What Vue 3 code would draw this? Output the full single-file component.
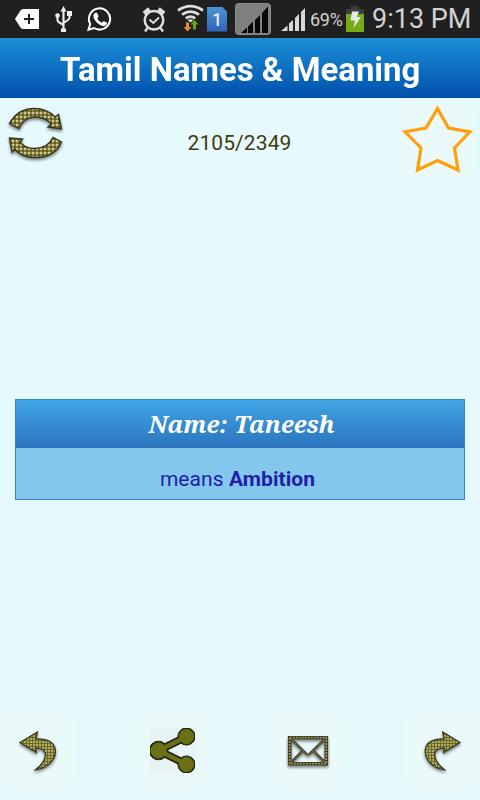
<template>
  <div class="screen">
    <div class="status-bar">
      <svg class="tag" width="25" height="38" viewBox="15 0 25 38">
        <path d="M15 19 L20.5 10.5 Q21.5 9 23 9 H39 V29 H23 Q21.5 29 20.5 27.5 Z" fill="#fff" />
        <path d="M29 14 V24 M24 19 H34" stroke="#222" stroke-width="2" />
      </svg>
      <svg class="usb" width="18" height="38" viewBox="55 0 18 38">
        <g fill="none" stroke="#eee" stroke-width="2.1">
          <path d="M63.5 9 V30 M57.5 16 V20 Q57.5 21.5 59 22.3 L63.5 25 M69.5 13 V17 Q69.5 19 68 20 L63.5 23" />
        </g>
        <path d="M63.5 6 L66.5 11.5 H60.5 Z M67 11 H72 V16 H67 Z M61 28.5 H66 V32 H61 Z" fill="#eee" />
        <circle cx="57.5" cy="15.5" r="2.3" fill="#eee" />
      </svg>
      <svg class="whatsapp" width="25" height="38" viewBox="87 0 25 38">
        <path d="M88.5 29.7 L90.2 24 A10.6 10.6 0 1 1 94 28 Z" fill="none" stroke="#fff" stroke-width="2" />
        <path d="M95 13 Q96.5 12 97.4 13.4 L98.5 16 Q98.8 17 97.3 18.4 Q98.8 21.6 101.8 22.8 Q103.2 20.8 104 21.2 L107 22.7 Q107.2 25.8 103.6 26 C99.5 26 92.8 20 93.4 15.5 Q93.7 13.7 95 13 Z" fill="#fff" />
      </svg>
      <svg class="alarm" width="26" height="38" viewBox="141 0 26 38">
        <circle cx="154" cy="20.2" r="9.3" fill="none" stroke="#ddd" stroke-width="2.5" />
        <path d="M149.5 19.5 L153.3 23 L159 17.5" fill="none" stroke="#ddd" stroke-width="1.9" />
        <path d="M144 13.5 L149.5 9 M164 13.5 L158.5 9" stroke="#ddd" stroke-width="4.2" />
        <path d="M147.5 28 L145 31.5 M160.5 28 L163 31.5" stroke="#ddd" stroke-width="2.4" />
      </svg>
      <svg class="wifi" width="28" height="38" viewBox="177 0 28 38">
        <g fill="none" stroke="#ddd" stroke-width="2.8">
          <path d="M178 10.5 Q190.5 1.8 203 10.5" />
          <path d="M182 14.6 Q190.5 8.6 199 14.6" />
          <path d="M185.8 18.3 Q190.5 15 195.2 18.3" />
        </g>
        <path d="M187.5 20 Q190.5 18.4 193.5 20 L190.5 22.5 Z" fill="#ddd" />
        <path d="M186 22.5 H189 V27 H191.5 L187.5 31.5 L183.5 27 H186 Z" fill="#e98d35" />
        <path d="M193 29.5 V24.5 H190.5 L194.5 20 L198.5 24.5 H196 V29.5 Z" fill="#6da51a" />
      </svg>
      <div class="sim">1</div>
      <svg class="no-sim" width="36" height="38" viewBox="235 0 36 38">
        <rect x="235.5" y="3.5" width="35" height="31" rx="3" fill="#808080" stroke="#8b8b8b" />
        <path d="M241 33 L247 27.5 V33 Z M248 33 V26.5 L253 21.5 V33 Z M255 33 V20 L260 15 V33 Z M262 33 V13 L268 6.5 V33 Z" fill="#080808" />
      </svg>
      <svg class="signal" width="25" height="38" viewBox="281 0 25 38">
        <path d="M281 31 L287.5 25.5 V31 Z M289 31 V23.5 L293 20 V31 Z M295 31 V18 L299 14 V31 Z M301 31 V12 L305 8 V31 Z" fill="#d8d8d8" />
      </svg>
      <span class="percent">69%</span>
      <svg class="battery" width="18" height="38" viewBox="346 0 18 38">
        <path d="M346 9 H351 V6 H359 V9 H364 V14 H346 Z" fill="#3c3c3c" />
        <path d="M346 14 H364 V32 H346 Z" fill="#76ab18" />
        <path d="M352 11.5 H359 L356.7 17 H361 L353.5 28 L355 20.5 H350.5 Z" fill="#e8e8e8" />
      </svg>
      <span class="clock">9:13 PM</span>
    </div>

    <div class="header"><span class="title">Tamil Names &amp; Meaning</span></div>

    <div class="toolbar">
      <button class="refresh">
        <svg width="66" height="75" viewBox="0 103 66 75">
          <defs>
            <pattern id="plaid" width="4" height="4" patternUnits="userSpaceOnUse">
              <rect width="4" height="4" fill="#85803f" />
              <rect width="2" height="2" fill="#d6c29c" />
              <rect x="2" y="2" width="2" height="2" fill="#5a6117" />
            </pattern>
          </defs>
          <g class="shaded" fill="url(#plaid)" stroke="#35351d" stroke-width="1.4">
            <path d="M9.5 123.5 Q18 108.5 34 108.5 Q47 108.5 55 117 L58.5 114.5 L61.5 129 L48 127 L51.5 124 Q45 116.5 34 117 Q23.5 117.5 19 128.5 Z" />
            <path d="M9.5 138 L22.5 139 L20 142.5 Q27 149 35 148.5 Q48 148 53 137.5 L61.5 142 Q55 157.5 35 157.5 Q22 157.5 14.5 149 L12 152 Z" />
          </g>
        </svg>
      </button>
      <span class="counter">{{ position }}/{{ total }}</span>
      <button class="favourite tile">
        <svg width="75" height="75" viewBox="400 103 75 75">
          <path d="M437.5 108.5 L448.5 128 L470 131.8 L454.5 148 L458 170 L437.5 160.5 L417.5 170 L421 148 L405 131.8 L426 128 Z" fill="none" stroke="#ff9f0a" stroke-width="3.2" />
        </svg>
      </button>
    </div>

    <div class="content">
      <div class="name-card">
        <div class="name"><span>Name: {{ entry.name }}</span></div>
        <div class="meaning"><span>means <b>{{ entry.meaning }}</b></span></div>
      </div>
    </div>

    <div class="actions">
      <button class="tile">
        <svg width="75" height="75" viewBox="0 713 75 75">
          <path class="shaded" d="M20 742.5 L37.5 732 L35.8 738.8 C48 738.5 55 743 55.5 751 C55.5 761 46 768.5 35.5 769.8 C43 764 47.5 756 44.5 751.5 Q42 747.8 35.5 748 L36.5 752.5 Z" fill="url(#plaid-fine)" stroke="#35351d" stroke-width="1.2" />
          <defs>
            <pattern id="plaid-fine" width="3" height="3" patternUnits="userSpaceOnUse">
              <rect width="3" height="3" fill="#696b29" />
              <rect width="2" height="2" fill="#b3ab62" />
            </pattern>
          </defs>
        </svg>
      </button>
      <button class="tile">
        <svg width="75" height="75" viewBox="135 713 75 75">
          <rect x="150" y="728" width="45" height="45" fill="#e5f3f3" />
          <path d="M155 773 L195 733 V745 L172 773 Z" fill="#eaf4f4" />
          <svg x="150" y="728" width="45" height="45" viewBox="150 728 45 45">
            <g stroke="#22240f" fill="#22240f">
              <path d="M187 736.5 L158.5 750.5 L187 764.5" fill="none" stroke-width="8" />
              <circle cx="158.5" cy="750.5" r="9.3" />
              <circle cx="186.5" cy="736.5" r="8.6" />
              <circle cx="186.5" cy="764.5" r="8.6" />
            </g>
            <g stroke="#697015" fill="#697015">
              <path d="M187 736.5 L158.5 750.5 L187 764.5" fill="none" stroke-width="4.6" />
              <circle cx="158.5" cy="750.5" r="7.6" />
              <circle cx="186.5" cy="736.5" r="7.1" />
              <circle cx="186.5" cy="764.5" r="7.1" />
            </g>
          </svg>
        </svg>
      </button>
      <button class="tile">
        <svg width="75" height="75" viewBox="270 713 75 75">
          <g class="shaded" fill="none">
            <path d="M289.7 737.7 H326.3 V763.7 H289.7 Z" stroke="#3b3926" stroke-width="3.6" />
            <path d="M290 738 L305 752.5 Q308 757 311 752.5 L326 738 M290 763.5 L302.5 751 M326 763.5 L313.5 751" stroke="#4a4833" stroke-width="2.6" />
            <path d="M289.7 737.7 H326.3 V763.7 H289.7 Z" stroke="#969058" stroke-width="1.8" stroke-dasharray="2 1" />
            <path d="M290 738 L305 752.5 Q308 757 311 752.5 L326 738 M290 763.5 L302.5 751 M326 763.5 L313.5 751" stroke="#85814f" stroke-width="1" stroke-dasharray="2 1" />
          </g>
        </svg>
      </button>
      <button class="tile">
        <svg width="75" height="75" viewBox="405 713 75 75">
          <path class="shaded" d="M460 742.5 L442.7 732 L444.2 738.8 C432 738.5 425.2 743 425.2 751 C425.2 761 434 768.5 444.5 769.8 C437 764 432.7 756 435.5 751.5 Q438 747.8 444.5 748 L443.5 752.5 Z" fill="url(#plaid-fine)" stroke="#35351d" stroke-width="1.2" />
        </svg>
      </button>
    </div>
  </div>
</template>

<script setup>
import { ref } from "vue";

const position = ref(2105);
const total = ref(2349);
const entry = ref({ name: "Taneesh", meaning: "Ambition" });
</script>

<style>
body {
  margin: 0;
  background: #e6fafe;
}
</style>

<style scoped>
.screen {
  width: 480px;
  height: 800px;
  display: flex;
  flex-direction: column;
  overflow: hidden;
  background: #e6fafe;
  font-family: Roboto, "Liberation Sans", sans-serif;
}
svg {
  display: block;
  flex: none;
}
.status-bar {
  height: 38px;
  flex: none;
  display: flex;
  align-items: center;
  background: #202020;
  color: #d2d2d2;
  white-space: nowrap;
}
.tag {
  margin-left: 15px;
}
.usb {
  margin-left: 15px;
}
.whatsapp {
  margin-left: 14px;
}
.alarm {
  margin-left: 29px;
}
.wifi {
  margin-left: 10px;
}
.sim {
  width: 20px;
  height: 25px;
  margin-left: 2px;
  background: linear-gradient(#4b92d4, #2f62bd);
  clip-path: polygon(0 0, 15px 0, 20px 5px, 20px 25px, 0 25px);
  color: #e6e6e6;
  font-size: 18px;
  font-weight: 500;
  line-height: 25px;
  text-align: center;
}
.no-sim {
  margin-left: 8px;
}
.signal {
  margin-left: 10px;
}
.percent {
  width: 36px;
  margin-left: 4px;
  font-size: 18px;
  letter-spacing: -0.3px;
  line-height: 38px;
  padding-top: 2px;
}
.clock {
  margin-left: 8px;
  font-size: 27px;
}
.header {
  height: 60px;
  flex: none;
  display: flex;
  align-items: center;
  justify-content: center;
  background: linear-gradient(#1c8fd8, #0050ab);
  color: #fff;
}
.title {
  font-size: 34px;
  font-weight: bold;
  white-space: nowrap;
  padding-top: 2px;
  transform: scaleX(0.968);
}
button {
  border: 0;
  padding: 0;
  background: none;
}
.toolbar {
  display: flex;
  justify-content: space-between;
  padding: 5px 5px 0 0;
}
.refresh {
  width: 79px;
}
.counter {
  font-size: 21px;
  letter-spacing: 0.1px;
  line-height: 80px;
  height: 75px;
  color: #443b0c;
}
.tile {
  width: 75px;
  height: 75px;
  border-radius: 14px;
  background: #eafafb;
}
.shaded {
  filter: drop-shadow(0 2px 1.5px rgba(0, 0, 0, 0.5));
}
.content {
  flex: 1;
  padding: 221px 15px 0;
}
.name-card {
  height: 101px;
  box-sizing: border-box;
  border: 1px solid #3983c9;
  background: #84c7ec;
  text-align: center;
}
.name {
  height: 48px;
  line-height: 47px;
  background: linear-gradient(#40a5e4, #2c74be);
  color: #fff;
  font-family: "Noto Serif", "Droid Serif", "DejaVu Serif Condensed", "DejaVu Serif", serif;
  font-size: 24px;
  font-weight: bold;
  font-style: italic;
  letter-spacing: -0.05px;
  padding-left: 3px;
}
.meaning {
  line-height: 62px;
  height: 51px;
  padding-right: 5px;
  color: #211dab;
  font-size: 21px;
  letter-spacing: 0.07px;
}
.actions {
  display: flex;
  justify-content: space-between;
  padding-bottom: 12px;
}
</style>
